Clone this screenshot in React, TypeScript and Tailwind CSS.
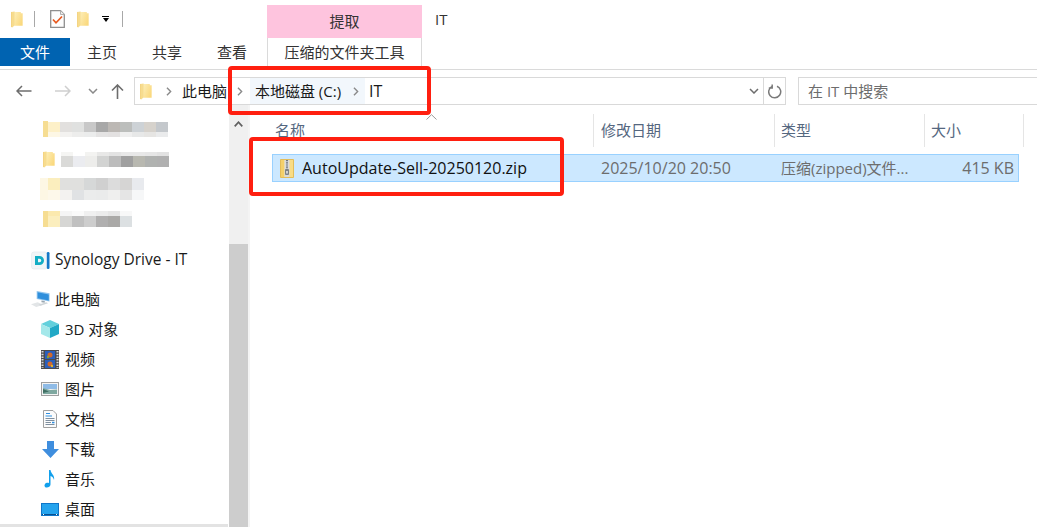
import { ReactNode } from "react";

const FONT = "font-['Open_Sans','Noto_Sans_CJK_SC',sans-serif]";

function Folder({ className = "" }: { className?: string }) {
  return (
    <svg viewBox="0 0 12 18" className={className}>
      <defs>
        <linearGradient id="folderFill" x1="0" y1="0" x2="1" y2="0.6">
          <stop offset="0" stopColor="#fdeeb8" />
          <stop offset="1" stopColor="#fad97f" />
        </linearGradient>
      </defs>
      <path d="M3 1 H10 V2.5 H12 V15.5 H3 Z" fill="url(#folderFill)" />
      <path d="M0 1 L3.5 .5 V15 L1 17.5 L0 17 Z" fill="#f7dc8e" />
      <path d="M0 1 V17" stroke="#f0c868" strokeWidth=".8" />
    </svg>
  );
}

function Chevron({ className = "" }: { className?: string }) {
  return (
    <svg viewBox="0 0 7 11" className={className} fill="none" stroke="#8a8a8a" strokeWidth="1.7">
      <path d="M1 1 L5.5 5.5 L1 10" />
    </svg>
  );
}

function CheckDoc() {
  return (
    <svg viewBox="0 0 15 18" className="h-[18px] w-[15px]">
      <path d="M.7.7 H10.5 L14.3 4.5 V17.3 H.7 Z" fill="#fdfdfd" stroke="#8f8f8f" strokeWidth="1.3" />
      <path d="M10.5 .7 V4.5 H14.3" fill="#ececec" stroke="#b0b0b0" />
      <path d="M3 9.5 L6 12.8 L12 6.5" fill="none" stroke="#e8591f" strokeWidth="1.7" />
    </svg>
  );
}

function ZipIcon() {
  return (
    <svg viewBox="0 0 14 19" className="h-[19px] w-[14px]">
      <path d="M.5.5 H13.5 V18.5 H.5 Z" fill="#f9dc84" stroke="#e3bd5a" />
      <path d="M1 1 H4 V18 H1 Z" fill="#f4d06a" />
      <path d="M4.5 1 H9.5 V18 H4.5 Z" fill="#d9dadb" />
      <path d="M7 1 V10" stroke="#70757a" strokeWidth="2" strokeDasharray="1.2 1" />
      <rect x="5" y="10" width="4" height="6" rx="1" fill="#7d8286" />
      <rect x="6.2" y="12" width="1.6" height="2.5" fill="#e5e5e5" />
    </svg>
  );
}

function SynologyIcon() {
  return (
    <svg viewBox="0 0 19 19" className="h-[19px] w-[19px]">
      <rect x="0.5" y="1" width="16" height="17" rx="2.5" fill="#f1f5f7" stroke="#e4eaee" strokeWidth=".7" />
      <path d="M4 5 H8.5 A4.5 4.5 0 0 1 8.5 14 H4 Z M7 7.7 V11.3 H8.5 A1.8 1.8 0 0 0 8.5 7.7 Z" fill="#12adc4" fillRule="evenodd" />
      <rect x="15.8" y="1" width="2.7" height="17" rx="1.2" fill="#1478c8" />
    </svg>
  );
}

function PcIcon() {
  return (
    <svg viewBox="0 0 20 18" className="h-[18px] w-[20px]">
      <path d="M6 .5 L19.5 3 V11.5 L6 9 Z" fill="#8fc4ee" />
      <path d="M7 2 L18.7 4.2 V10.5 L7 8.2 Z" fill="#2f8fdc" />
      <path d="M11 10.5 L14.5 11.2 V13 L11 12.5 Z" fill="#9aa6b0" />
      <path d="M0 14.5 L7 12.5 L13 15 L5.5 17.5 Z" fill="#e2e5e7" />
      <path d="M8 15 L16 12.5 L18 13.5 L10 16 Z" fill="#d0d5d8" />
    </svg>
  );
}

function CubeIcon() {
  return (
    <svg viewBox="0 0 18 18" className="h-[18px] w-[18px]">
      <path d="M9 0 L18 4 L9 8 L0 4 Z" fill="#63d0dc" />
      <path d="M0 4 L9 8 V18 L0 14 Z" fill="#a4e8ea" />
      <path d="M18 4 L9 8 V18 L18 14 Z" fill="#22a9c6" />
    </svg>
  );
}

function VideoIcon() {
  return (
    <svg viewBox="0 0 18 19" className="h-[19px] w-[18px]">
      <rect width="18" height="19" fill="#4a4b4f" />
      <path d="M1.5 1 V18 M16.5 1 V18" stroke="#d9d9d9" strokeWidth="2" strokeDasharray="1.5 1.2" />
      <rect x="4" y="1" width="10" height="8" fill="#2b5fbc" />
      <rect x="4" y="10" width="10" height="8" fill="#2b5fbc" />
      <circle cx="9" cy="5" r="2.5" fill="#d2692b" />
      <circle cx="7" cy="7" r="1.2" fill="#88a534" />
      <circle cx="9" cy="14" r="2.5" fill="#d2692b" />
      <circle cx="11" cy="16" r="1.2" fill="#e2b52e" />
    </svg>
  );
}

function PictureIcon() {
  return (
    <svg viewBox="0 0 18 14" className="h-[14px] w-[18px]">
      <rect x=".5" y=".5" width="17" height="13" fill="#f4f4f4" stroke="#a0a0a0" />
      <rect x="2" y="2" width="14" height="5" fill="#8fbbe6" />
      <path d="M2 6 L9 8 L16 7.5 V12 H2 Z" fill="#7fa8a0" />
      <path d="M2 7 L8 9.5 L2 11 Z" fill="#3f6f63" />
    </svg>
  );
}

function DocIcon() {
  return (
    <svg viewBox="0 0 14 18" className="h-[18px] w-[14px]">
      <path d="M.5.5 H10 L13.5 4 V17.5 H.5 Z" fill="#fbfbfb" stroke="#a0a0a0" />
      <path d="M3 3.5 H7 M2.5 6 H9" stroke="#2f8fe0" strokeWidth="1.2" />
      <path d="M2.5 8.5 H11.5 M2.5 10.5 H11.5 M2.5 12.5 H8 M2.5 14.5 H11.5" stroke="#7f8f9f" />
      <rect x="9" y="11.8" width="2.5" height="1.5" fill="#2f8fe0" />
    </svg>
  );
}

function DownIcon() {
  return (
    <svg viewBox="0 0 17 17" className="h-[17px] w-[17px]">
      <path d="M5 0 H12 V8 H17 L8.5 17 L0 8 H5 Z" fill="#3f8ede" />
    </svg>
  );
}

function MusicIcon() {
  return (
    <svg viewBox="0 0 12 18" className="h-[18px] w-[12px]">
      <path d="M5 0 H6.5 C7 4 11 5 10 10 C9.5 7.5 8 6.5 6.5 6 V14.5 C6.5 17 3.5 18 1.7 17.4 C-.5 16.5.5 13 3 12.7 C3.8 12.6 4.5 12.8 5 13 Z" fill="#12a0ec" />
    </svg>
  );
}

function DesktopIcon() {
  return (
    <svg viewBox="0 0 18 13" className="h-[13px] w-[18px]">
      <rect width="18" height="13" fill="#0f76c9" />
      <rect x="1" y="1" width="16" height="10" fill="#25a4ee" />
      <rect x="1" y="11" width="16" height="1" fill="#0a4f8f" />
      <rect x="2" y="11" width="1" height="1" fill="#fff" />
      <rect x="15" y="11" width="1" height="1" fill="#fff" />
    </svg>
  );
}

type Mosaic = {
  pad: number;
  lead: ReactNode;
  top: number;
  bottom: number;
  topCells: string[];
  bottomCells: string[];
};

const mosaics: Mosaic[] = [
  {
    pad: 43,
    lead: <div className="h-4 w-[5px] bg-[#f6dd92]" />,
    top: 10,
    bottom: 5,
    topCells: ["#fdf0c8", "#e2e0de", "#e0e1e0", "#c8c8c8", "#a8a8a8", "#bcb8b4", "#bcbebc", "#cdd2d6", "#d6d2cc", "#c4c8cc"],
    bottomCells: ["#fdf7e5", "#f3f2f0", "#ededec", "#ebecec", "#e4e3e3", "#e3e1e1", "#efefef", "#e7e8e8", "#e6e5e3", "#eaebec"],
  },
  {
    pad: 43,
    lead: <Folder className="mr-[6px] h-[17px] w-3" />,
    top: 4,
    bottom: 11,
    topCells: ["#f5f5f3", "#ffffff", "#f3f3f1", "#e8e8e7", "#e3e3e3", "#e8e8e8", "#e8e8e8", "#e6e6e6", "#e2e2e2"],
    bottomCells: ["#dadad8", "#ebecf0", "#ededeb", "#d2d3d2", "#bcbcbc", "#a0a0a0", "#b8b8b0", "#b0b2b0", "#b0b0b0"],
  },
  {
    pad: 40,
    lead: <div className="h-[22px] w-2 bg-[#fdf7e4]" />,
    top: 12,
    bottom: 10,
    topCells: ["#fbeebe", "#e0e0de", "#e0e0de", "#d6d8d8", "#d0d0d0", "#dcdcdc", "#d6d5d4", "#e8eaee"],
    bottomCells: ["#fdf8ea", "#f3f2f0", "#e0e2e4", "#ebecec", "#eaebeb", "#efefee", "#e5e5e5", "#f6f7f8"],
  },
  {
    pad: 43,
    lead: <div className="h-4 w-[5px] bg-[#f6dd92]" />,
    top: 5,
    bottom: 11,
    topCells: ["#fbe9ae", "#f5f5f5", "#fafafa", "#f0f0f0", "#ececec", "#e6e6e6", "#f8f8f8"],
    bottomCells: ["#fbeebe", "#d6d6d4", "#c0c0c0", "#cdcdcd", "#b0afaf", "#aaa9a7", "#dce0e2"],
  },
];

function BlurRow({ m }: { m: Mosaic }) {
  return (
    <div className="flex h-[30px] items-center" style={{ paddingLeft: m.pad }}>
      {m.lead}
      <div>
        {[
          { cells: m.topCells, h: m.top },
          { cells: m.bottomCells, h: m.bottom },
        ].map((row, i) => (
          <div key={i} className="flex">
            {row.cells.map((c, j) => (
              <div key={j} className="w-3" style={{ height: row.h, background: c }} />
            ))}
          </div>
        ))}
      </div>
    </div>
  );
}

function NavRow({ icon, label, top, size = "text-[15px]" }: { icon: ReactNode; label: string; top?: boolean; size?: string }) {
  return (
    <div className={`flex h-[30px] items-center text-[#1a1a1a] ${size} ${top ? "pl-[31px]" : "pl-[41px]"}`}>
      <span className={`flex items-center justify-center ${top ? "mr-[5px] w-[19px]" : "mr-[6px] w-[18px]"}`}>{icon}</span>
      {label}
    </div>
  );
}

export default function App() {
  return (
    <div className={`relative flex h-[527px] w-[1037px] flex-col overflow-hidden bg-white ${FONT}`}>
      {/* Title row */}
      <div className="flex h-[38px] items-center">
        <div className="flex w-[267px] items-center pl-[11px]">
          <Folder className="h-[17px] w-3" />
          <div className="ml-[11px] h-4 w-px bg-[#a8a8a8]" />
          <div className="ml-[15px]"><CheckDoc /></div>
          <Folder className="ml-3 h-[17px] w-3" />
          <div className="ml-[13px] flex flex-col items-center gap-px">
            <div className="h-px w-[7px] bg-black" />
            <div className="h-0 w-0 border-x-[3px] border-t-[4px] border-x-transparent border-t-black" />
          </div>
          <div className="ml-[13px] h-4 w-px bg-[#a8a8a8]" />
        </div>
        <div className="mt-[5px] flex h-[33px] w-[155px] items-center justify-center bg-[#fec4de] text-[15px] text-[#333]">提取</div>
        <span className="ml-[13px] text-[15px] text-[#333]">IT</span>
      </div>

      {/* Ribbon tabs */}
      <div className="flex h-[32px] border-b border-[#dadada]">
        <div className="flex h-[28px] w-[70px] items-center justify-center bg-[#0063b1] text-[15px] text-white">文件</div>
        <div className="flex h-[28px] w-[197px] items-center pl-[17px] text-[15px] text-[#333]">
          <span>主页</span>
          <span className="ml-[35px]">共享</span>
          <span className="ml-[35px]">查看</span>
        </div>
        <div className="flex h-[28px] w-[155px] items-center justify-center border-x border-[#dadada] text-[15px] text-[#333]">压缩的文件夹工具</div>
      </div>

      {/* Address row */}
      <div className="flex h-[35px] items-end">
        <div className="flex h-[28px] w-[134px] items-center pl-4">
          <svg viewBox="0 0 16 12" className="h-3 w-4" fill="none" stroke="#6d6d6d" strokeWidth="1.5"><path d="M15.5 6 H1 M6 1 L1 6 L6 11" /></svg>
          <svg viewBox="0 0 16 12" className="ml-[23px] h-3 w-4" fill="none" stroke="#cfcfcf" strokeWidth="1.5"><path d="M0 6 H15 M10 1 L15 6 L10 11" /></svg>
          <svg viewBox="0 0 10 6" className="ml-[17px] h-[6px] w-[10px]" fill="none" stroke="#8a8a8a" strokeWidth="1.5"><path d="M1 1 L5 5 L9 1" /></svg>
          <svg viewBox="0 0 13 15" className="ml-[13px] h-[15px] w-[13px]" fill="none" stroke="#6d6d6d" strokeWidth="1.6"><path d="M6.5 15 V1 M1 6.5 L6.5 1 L12 6.5" /></svg>
        </div>
        <div className="flex h-[28px] w-[652px] items-center border border-[#d9d9d9] text-[15px] text-[#1a1a1a]">
          <Folder className="ml-[5px] h-[17px] w-3" />
          <Chevron className="ml-[14px] h-[9px] w-[6px]" />
          <span className="ml-[10px]">此电脑</span>
          <Chevron className="ml-[10px] h-[9px] w-[6px]" />
          <span className="ml-[7px] flex h-full w-[96px] items-center justify-center bg-[#f2f7fc]">本地磁盘 (C:)</span>
          <span className="flex h-full w-[19px] items-center justify-center bg-[#f2f7fc]"><Chevron className="h-[9px] w-[6px]" /></span>
          <span className="ml-1 text-[16px]">IT</span>
          <div className="ml-auto flex h-full items-center">
            <svg viewBox="0 0 10 6" className="h-[6px] w-[10px]" fill="none" stroke="#6d6d6d" strokeWidth="1.5"><path d="M1 1 L5 5 L9 1" /></svg>
            <div className="ml-1 h-full w-px bg-[#d9d9d9]" />
            <svg viewBox="0 0 14 15" className="mx-[3px] ml-[4px] h-[15px] w-[14px]" fill="none" stroke="#7a7a7a" strokeWidth="1.5"><path d="M9 2.2 A6 6 0 1 1 4 2.4 M4.2 .5 V4 H.8" /></svg>
          </div>
        </div>
        <div className="ml-3 flex h-[28px] flex-1 items-center border border-r-0 border-[#d9d9d9] pl-[9px] text-[15px] text-[#6d6d6d]">在 IT 中搜索</div>
      </div>

      {/* Main area */}
      <div className="flex min-h-0 flex-1">
        <div className="flex w-[229px] flex-col pt-[9px]">
          {mosaics.map((m, i) => (
            <BlurRow key={i} m={m} />
          ))}
          <div className="mt-[10px]"><NavRow top icon={<SynologyIcon />} label="Synology Drive - IT" size="pt-[2px] text-[15.5px]" /></div>
          <div className="mt-[10px]"><NavRow top icon={<PcIcon />} label="此电脑" /></div>
          <NavRow icon={<CubeIcon />} label="3D 对象" />
          <NavRow icon={<VideoIcon />} label="视频" />
          <NavRow icon={<PictureIcon />} label="图片" />
          <NavRow icon={<DocIcon />} label="文档" />
          <NavRow icon={<DownIcon />} label="下载" />
          <NavRow icon={<MusicIcon />} label="音乐" />
          <NavRow icon={<DesktopIcon />} label="桌面" />
          <div className="mr-px mt-auto h-[3px] bg-[#e3e3e3]" />
        </div>

        {/* Sidebar scrollbar */}
        <div className="flex w-[19px] flex-col bg-[#f0f0f0]">
          <div className="flex h-[139px] justify-center pt-[16px]">
            <svg viewBox="0 0 9 6" className="h-[6px] w-[9px]" fill="none" stroke="#606060" strokeWidth="1.7"><path d="M.7 5.3 L4.5 1.2 L8.3 5.3" /></svg>
          </div>
          <div className="flex-1 bg-[#cdcdcd]" />
        </div>

        {/* File list */}
        <div className="relative min-w-0 flex-1 border-l-2 border-[#f4f4f4] pl-[21px] pt-[9px] text-[15px]">
          <div className="flex h-[33px] items-center text-[#55677f]">
            <div className="h-full w-[322px] pl-[4px] leading-[33px]">名称</div>
            <div className="h-full w-[181px] border-l border-[#e5e5e5] pl-[7px] leading-[33px]">修改日期</div>
            <div className="h-full w-[150px] border-l border-[#e5e5e5] pl-[6px] leading-[33px]">类型</div>
            <div className="h-full w-[100px] border-x border-[#e5e5e5] pl-[6px] leading-[33px]">大小</div>
          </div>
          <div className="ml-px mt-[7px] flex h-[28px] w-[747px] items-center border border-[#99d1ff] bg-[#cce8ff]">
            <span className="ml-[7px]"><ZipIcon /></span>
            <span className="ml-[8px] w-[299px] text-[16px] text-[#111]">AutoUpdate-Sell-20250120.zip</span>
            <span className="w-[180px] text-[16px] text-[#6d6d6d]">2025/10/20 20:50</span>
            <span className="w-[145px] whitespace-nowrap text-[#6d6d6d]">压缩(zipped)文件...</span>
            <span className="flex-1 pr-[4px] text-right text-[16px] text-[#6d6d6d]">415 KB</span>
          </div>
          <svg viewBox="0 0 11 6" className="absolute left-[176px] top-[9px] h-[6px] w-[11px]" fill="none" stroke="#9a9a9a"><path d="M.5 5.5 L5.5 .7 L10.5 5.5" /></svg>
        </div>
      </div>

      {/* Red annotations */}
      <div className="absolute left-[228px] top-[66px] h-[49px] w-[203px] rounded-[4px] border-[4px] border-[#ff1f10]" />
      <div className="absolute left-[249px] top-[137px] h-[59px] w-[315px] rounded-[4px] border-[4px] border-[#ff1f10]" />
    </div>
  );
}
